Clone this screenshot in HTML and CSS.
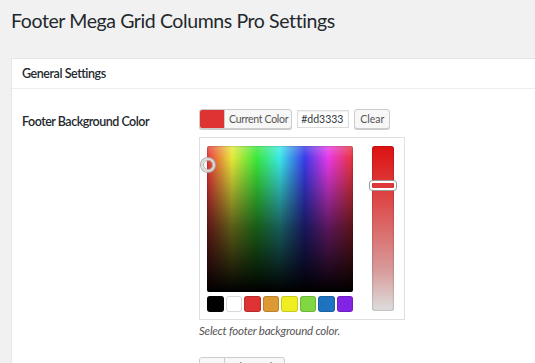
FILE: index.html
```html
<!DOCTYPE html>
<html lang="en">
  <head>
    <meta charset="UTF-8" />
    <meta name="viewport" content="width=device-width, initial-scale=1.0" />
    <title>Footer Mega Grid Columns Pro Settings</title>
    <link rel="stylesheet" href="styles.css">
  </head>
  <body>
    <div class="wrap">
      <h1>Footer Mega Grid Columns Pro Settings</h1>

      <!-- Settings panel -->
      <div class="panel">
        <h3 class="panel-head">General Settings</h3>

        <div class="form-row">
          <label class="row-label">Footer Background Color</label>
          <div class="row-field">
            <div class="picker-bar">
              <button type="button" class="color-button">
                <span class="color-swatch red"></span>
                <span class="color-text">Current Color</span>
              </button>
              <input type="text" class="hex-input" value="#dd3333" />
              <button type="button" class="clear-button">Clear</button>
            </div>

            <div class="picker-box">
              <div class="picker-main">
                <div class="square">
                  <span class="square-handle"></span>
                </div>
                <div class="palette">
                  <span class="pal" style="background: #000"></span>
                  <span class="pal" style="background: #fff"></span>
                  <span class="pal" style="background: #dd3333"></span>
                  <span class="pal" style="background: #dd9933"></span>
                  <span class="pal" style="background: #eeee22"></span>
                  <span class="pal" style="background: #81d742"></span>
                  <span class="pal" style="background: #1e73be"></span>
                  <span class="pal" style="background: #8224e3"></span>
                </div>
              </div>
              <div class="strip">
                <span class="strip-handle"></span>
              </div>
            </div>

            <p class="description">Select footer background color.</p>
          </div>
        </div>

        <div class="form-row">
          <label class="row-label">Footer Text Color</label>
          <div class="row-field">
            <div class="picker-bar">
              <button type="button" class="color-button">
                <span class="color-swatch empty"></span>
                <span class="color-text">Select Color</span>
              </button>
            </div>
          </div>
        </div>
      </div>
    </div>
  </body>
</html>
```

FILE: styles.css
```css
body {
  margin: 0;
  background-color: #f1f1f1;
  font-family: Lato, "Open Sans", sans-serif;
  color: #23282d;
  overflow: hidden;
}

.wrap {
  padding-left: 11px;
}

h1 {
  margin: 0;
  padding-top: 8px;
  font-size: 19.5px;
  font-weight: 400;
  line-height: 26px;
  letter-spacing: -0.4px;
}

.panel {
  margin-top: 24px;
  background-color: #fff;
  border: 1px solid #e5e5e5;
  border-right: none;
}

.panel-head {
  margin: 0;
  padding: 0 10px;
  font-size: 12.5px;
  font-weight: 600;
  line-height: 29px;
  letter-spacing: -0.45px;
  border-bottom: 1px solid #eee;
}

.form-row {
  display: grid;
  grid-template-columns: 177px 1fr;
  padding: 20px 10px 0;
}

.row-label {
  padding-top: 5px;
  font-size: 12.5px;
  font-weight: 600;
  letter-spacing: -0.5px;
}

.picker-bar {
  display: flex;
  align-items: center;
  gap: 5px;
}

.color-button {
  display: flex;
  height: 20px;
  padding: 0;
  background-color: #f7f7f7;
  border: 1px solid #ccc;
  border-radius: 3px;
  box-shadow: 0 1px 0 #ccc;
  overflow: hidden;
  font-family: inherit;
}

.color-swatch {
  width: 24px;
  height: 100%;
}

.red {
  background-color: #dd3333;
}

.empty {
  background-color: #f7f7f7;
}

.color-text {
  padding: 0 3px 0 4px;
  line-height: 18px;
  font-size: 10.5px;
  letter-spacing: -0.3px;
  color: #555;
  border-left: 1px solid #ccc;
}

.hex-input {
  width: 44px;
  height: 14px;
  padding: 1px 3px;
  font-family: inherit;
  font-size: 10.5px;
  color: #32373c;
  border: 1px solid #ddd;
  box-shadow: inset 0 1px 2px rgba(0, 0, 0, 0.07);
}

.clear-button {
  height: 20px;
  padding: 0 5px;
  font-family: inherit;
  font-size: 10.5px;
  color: #555;
  background-color: #f7f7f7;
  border: 1px solid #ccc;
  border-radius: 3px;
  box-shadow: 0 1px 0 #ccc;
}

/* Iris style picker */
.picker-box {
  display: flex;
  gap: 19px;
  width: 188px;
  margin-top: 8px;
  padding: 8px 9px 7px 7px;
  border: 1px solid #dfdfdf;
}

.picker-main {
  display: flex;
  flex-direction: column;
  gap: 4px;
}

.square {
  position: relative;
  width: 146px;
  height: 146px;
  border-radius: 2px;
  box-shadow: inset 0 0 2px rgba(0, 0, 0, 0.4);
  background-image:
    linear-gradient(to bottom, rgba(255, 255, 255, 0.2) 0%, rgba(0, 0, 0, 0) 8%, rgba(0, 0, 0, 0.6) 55%, #000 100%),
    linear-gradient(to right, #e8333a 0%, #e8e83a 17%, #3ae83a 34%, #3ae8e8 50%, #3a3ae8 67%, #e83ae8 83%, #e8333a 100%);
}

.square-handle {
  position: absolute;
  left: -6px;
  top: 12px;
  width: 10px;
  height: 10px;
  border: 2px solid #ddd;
  border-radius: 50%;
  box-shadow: 0 0 0 1px #aaa, inset 0 0 0 1px #aaa;
}

.palette {
  display: flex;
  gap: 2px;
}

.pal {
  width: 16.5px;
  height: 16px;
  border-radius: 3px;
  box-shadow: inset 0 0 0 1px rgba(0, 0, 0, 0.15);
}

.strip {
  position: relative;
  width: 22px;
  height: 165px;
  border-radius: 3px;
  box-shadow: inset 0 0 2px rgba(0, 0, 0, 0.4);
  background-image: linear-gradient(to bottom, #dd1111 0%, #dd4444 30%, #d89a9a 75%, #dedede 100%);
}

.strip-handle {
  position: absolute;
  left: -2px;
  top: 35px;
  width: 22px;
  height: 5px;
  border: 2px solid #fff;
  border-radius: 3px;
  box-shadow: 0 0 0 1px #999;
}

.description {
  margin: 4px 0 0;
  font-size: 11.5px;
  font-style: italic;
  letter-spacing: -0.2px;
  color: #555;
}
```
